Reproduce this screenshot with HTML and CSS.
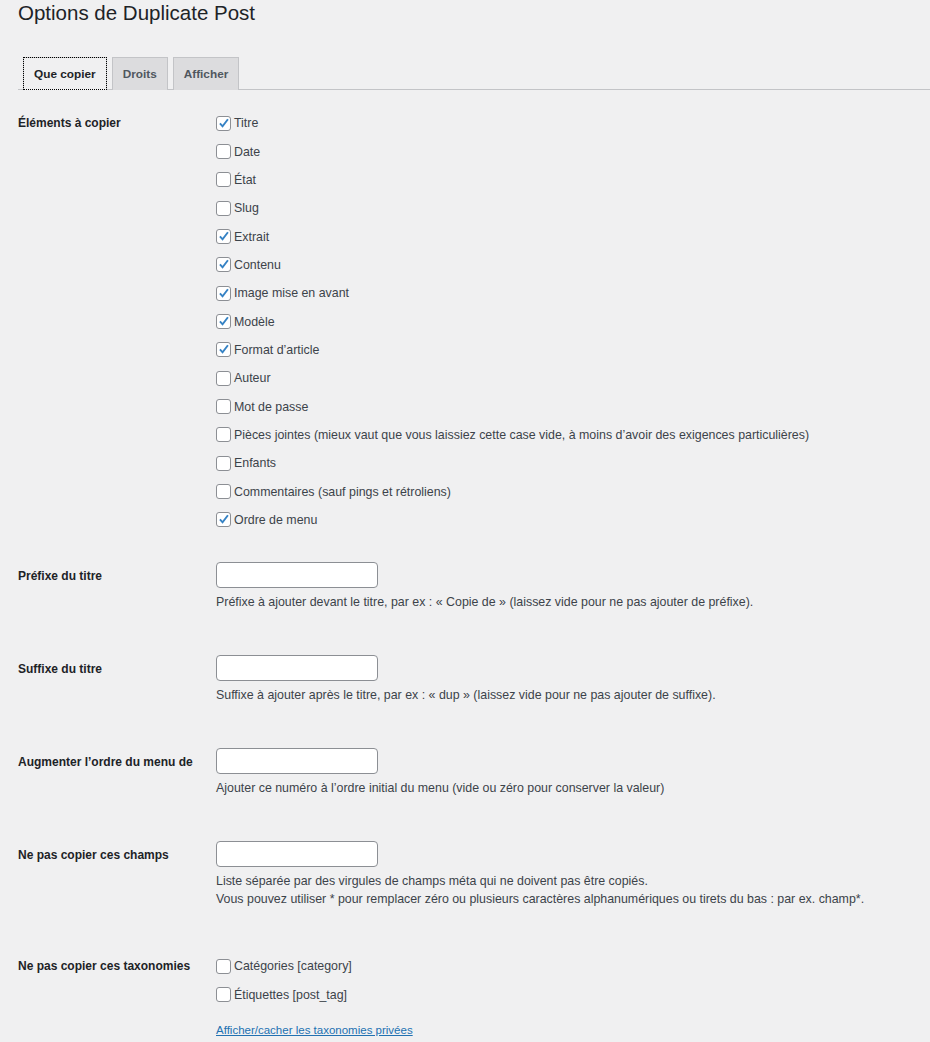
FILE: index.html
```html
<!DOCTYPE html>
<html lang="fr">
<head>
    <meta charset="UTF-8">
    <title>Options de Duplicate Post</title>
    <link rel="stylesheet" href="styles.css">
</head>
<body>
<div class="wrap">
    <h1>Options de Duplicate Post</h1>

    <nav class="nav-tab-wrapper">
        <a class="nav-tab nav-tab-active" href="#">Que copier</a>
        <a class="nav-tab" href="#">Droits</a>
        <a class="nav-tab" href="#">Afficher</a>
    </nav>

    <div class="form-table">
        <div class="row row-checks">
            <div class="th">Éléments à copier</div>
            <div class="td">
                <label class="check"><span class="box on"><svg viewBox="0 0 15 15"><path d="M3.4 7.4 L6.4 10.8 L12.6 2.6"/></svg></span>Titre</label>
                <label class="check"><span class="box"></span>Date</label>
                <label class="check"><span class="box"></span>État</label>
                <label class="check"><span class="box"></span>Slug</label>
                <label class="check"><span class="box on"><svg viewBox="0 0 15 15"><path d="M3.4 7.4 L6.4 10.8 L12.6 2.6"/></svg></span>Extrait</label>
                <label class="check"><span class="box on"><svg viewBox="0 0 15 15"><path d="M3.4 7.4 L6.4 10.8 L12.6 2.6"/></svg></span>Contenu</label>
                <label class="check"><span class="box on"><svg viewBox="0 0 15 15"><path d="M3.4 7.4 L6.4 10.8 L12.6 2.6"/></svg></span>Image mise en avant</label>
                <label class="check"><span class="box on"><svg viewBox="0 0 15 15"><path d="M3.4 7.4 L6.4 10.8 L12.6 2.6"/></svg></span>Modèle</label>
                <label class="check"><span class="box on"><svg viewBox="0 0 15 15"><path d="M3.4 7.4 L6.4 10.8 L12.6 2.6"/></svg></span>Format d’article</label>
                <label class="check"><span class="box"></span>Auteur</label>
                <label class="check"><span class="box"></span>Mot de passe</label>
                <label class="check"><span class="box"></span>Pièces jointes (mieux vaut que vous laissiez cette case vide, à moins d’avoir des exigences particulières)</label>
                <label class="check"><span class="box"></span>Enfants</label>
                <label class="check"><span class="box"></span>Commentaires (sauf pings et rétroliens)</label>
                <label class="check"><span class="box on"><svg viewBox="0 0 15 15"><path d="M3.4 7.4 L6.4 10.8 L12.6 2.6"/></svg></span>Ordre de menu</label>
            </div>
        </div>

        <div class="row row-field">
            <div class="th">Préfixe du titre</div>
            <div class="td">
                <input type="text" class="text-input">
                <p class="description">Préfixe à ajouter devant le titre, par ex : « Copie de » (laissez vide pour ne pas ajouter de préfixe).</p>
            </div>
        </div>

        <div class="row row-field">
            <div class="th">Suffixe du titre</div>
            <div class="td">
                <input type="text" class="text-input">
                <p class="description">Suffixe à ajouter après le titre, par ex : « dup » (laissez vide pour ne pas ajouter de suffixe).</p>
            </div>
        </div>

        <div class="row row-field">
            <div class="th">Augmenter l’ordre du menu de</div>
            <div class="td">
                <input type="text" class="text-input">
                <p class="description">Ajouter ce numéro à l’ordre initial du menu (vide ou zéro pour conserver la valeur)</p>
            </div>
        </div>

        <div class="row row-field">
            <div class="th">Ne pas copier ces champs</div>
            <div class="td">
                <input type="text" class="text-input">
                <p class="description">Liste séparée par des virgules de champs méta qui ne doivent pas être copiés.<br>Vous pouvez utiliser * pour remplacer zéro ou plusieurs caractères alphanumériques ou tirets du bas : par ex. champ*.</p>
            </div>
        </div>

        <div class="row row-tax">
            <div class="th">Ne pas copier ces taxonomies</div>
            <div class="td">
                <label class="check"><span class="box"></span>Catégories [category]</label>
                <label class="check"><span class="box"></span>Étiquettes [post_tag]</label>
                <a class="toggle-link" href="#">Afficher/cacher les taxonomies privées</a>
            </div>
        </div>
    </div>
</div>
</body>
</html>
```

FILE: styles.css
```css
html, body{
    margin: 0;
    padding: 0;
    background-color: #f0f0f1;
}
body{
    font-family: "Liberation Sans", Arial, sans-serif;
    font-size: 12.4px;
    color: #3c434a;
}
.wrap{
    padding-left: 18px;
    overflow: hidden;
}
h1{
    margin: 0;
    height: 31px;
    line-height: 26px;
    font-size: 20.5px;
    font-weight: 400;
    color: #1d2327;
}

/* tabs */
.nav-tab-wrapper{
    display: flex;
    gap: 5px;
    margin-top: 26px;
    padding-left: 5px;
    border-bottom: 1px solid #c3c4c7;
    height: 32px;
}
.nav-tab{
    display: block;
    box-sizing: border-box;
    height: 33px;
    line-height: 33px;
    padding: 0 10px;
    border: 1px solid #c3c4c7;
    border-bottom: none;
    background-color: #dcdcde;
    color: #50575e;
    font-weight: 700;
    font-size: 11.8px;
    text-decoration: none;
}
.nav-tab-active{
    background-color: #f0f0f1;
    color: #1d2327;
    outline: 1px dotted #000;
    outline-offset: -1px;
}

/* form */
.form-table{
    padding-top: 19px;
}
.row{
    display: flex;
}
.th{
    width: 198px;
    flex-shrink: 0;
    font-weight: 700;
    font-size: 12px;
    color: #1d2327;
}
.td{
    display: flex;
    flex-direction: column;
    align-items: flex-start;
}
.check{
    display: flex;
    align-items: center;
    height: 28.35px;
    white-space: nowrap;
}
.box{
    display: block;
    box-sizing: border-box;
    width: 15px;
    height: 15px;
    margin-right: 3px;
    border: 1px solid #8c8f94;
    border-radius: 3px;
    background-color: #fff;
}
.box svg{
    display: block;
    width: 13px;
    height: 13px;
}
.box svg path{
    fill: none;
    stroke: #3582c4;
    stroke-width: 2.2;
}
.row-checks .th{
    line-height: 28.35px;
}
.row-checks{
    margin-bottom: 28px;
}

.row-field{
    margin-bottom: 44px;
}
.row-field .th{
    line-height: 28px;
}
.text-input{
    display: block;
    box-sizing: border-box;
    width: 162px;
    height: 26px;
    margin: 0;
    padding: 0 6px;
    border: 1px solid #8c8f94;
    border-radius: 4px;
    background-color: #fff;
    font: inherit;
}
.description{
    margin: 5px 0 0 0;
    line-height: 18px;
    color: #3c434a;
}

.row-tax .th{
    line-height: 28px;
}
.toggle-link{
    margin-top: 12px;
    line-height: 18px;
    font-size: 11.5px;
    color: #2271b1;
    text-decoration: underline;
}
```
